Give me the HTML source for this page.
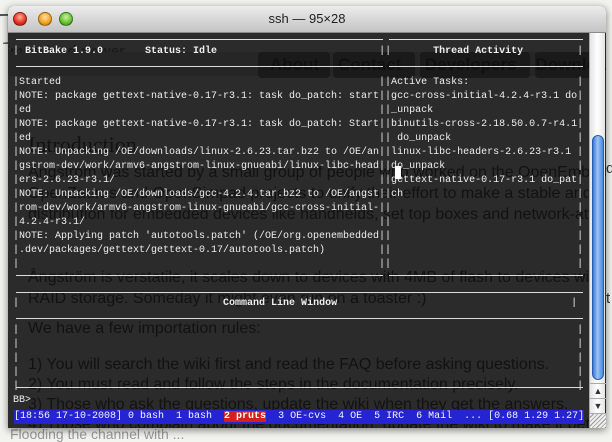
<!DOCTYPE html>
<html><head><meta charset="utf-8">
<style>
*{margin:0;padding:0;box-sizing:border-box}
body{width:612px;height:437px;overflow:hidden;background:#f3f3ef;position:relative;font-family:"Liberation Sans",sans-serif}
.pg{position:absolute;color:#222;font-family:"Liberation Sans",sans-serif;font-size:15px;white-space:nowrap}
.win{position:absolute;left:8px;top:6px;width:598px;height:422px;background:#2b2b2b;border-radius:5px 5px 0 0;overflow:hidden;box-shadow:0 2px 8px rgba(0,0,0,.5)}
.tb{position:absolute;left:0;top:0;width:598px;height:27px;background:linear-gradient(#ececec,#d4d4d4 60%,#c4c4c4);border-bottom:1px solid #8a8a8a}
.tl{position:absolute;top:6px;width:14px;height:14px;border-radius:50%;border:1px solid rgba(0,0,0,.35)}
.title{position:absolute;top:5px;left:0;width:598px;text-align:center;font-size:13px;color:#222}
.t{position:absolute;font-family:"Liberation Mono",monospace;font-size:10px;line-height:14px;color:#eee;white-space:pre}
.b{font-weight:bold}
.h{position:absolute;height:1px;background:#ddd}
.ghost{position:absolute;color:#121212;font-size:16px;white-space:nowrap;font-family:"Liberation Sans",sans-serif}
.sb{position:absolute;left:581px;top:27px;width:16px;height:395px;background:linear-gradient(90deg,#e4e4e4,#fff 50%,#e4e4e4);border-left:1px solid #aaa}
.thumb{position:absolute;left:2px;top:102px;width:12px;height:245px;border-radius:6px;background:linear-gradient(90deg,#3a78d8,#9cc4f4 45%,#4a88e0);border:1px solid #2a5ab0}
</style></head><body>
<div class="pg" style="left:-4px;top:2px;font-family:'Liberation Serif',serif;font-size:46px;color:#555">The Ångström Distribution</div>
<div class="pg" style="left:606px;top:160px;color:#333">d</div>
<div class="pg" style="left:606px;top:290px;color:#333">t</div>
<div class="pg" style="left:10px;top:426px;color:#999;font-size:14px">Flooding the channel with ...</div>

<div class="win">
 <div class="ghost" style="left:-8px;top:37px;font-weight:bold;font-size:15px;color:#1c1c1c">Embedded power</div>
 <div style="position:absolute;left:0;top:46px;width:598px;height:24px;background:#262626"></div>
 <div style="position:absolute;left:250px;top:46px;width:72px;height:26px;background:#1a1a1a;border-radius:4px"></div>
 <div style="position:absolute;left:325px;top:46px;width:82px;height:26px;background:#1a1a1a;border-radius:4px"></div>
 <div style="position:absolute;left:412px;top:46px;width:110px;height:26px;background:#1a1a1a;border-radius:4px"></div>
 <div style="position:absolute;left:527px;top:46px;width:70px;height:26px;background:#1a1a1a;border-radius:4px"></div>
 <div class="ghost" style="left:262px;top:49px;font-weight:bold;font-size:17px;color:#101010">About &nbsp;&nbsp;&nbsp;Contact &nbsp;&nbsp;&nbsp;&nbsp;Developers &nbsp;&nbsp;&nbsp;Downloads</div>
 <div class="ghost" style="left:20px;top:126px;font-size:22px;font-family:'Liberation Serif',serif">Introduction</div>
 <div class="ghost" style="left:20px;top:158px">Ångström was started by a small group of people who worked on the OpenEmbedded</div>
 <div class="ghost" style="left:20px;top:179px">OpenZaurus and OpenSimpad projects to unify their effort to make a stable and us</div>
 <div class="ghost" style="left:20px;top:200px">distribution for embedded devices like handhelds, set top boxes and network-att</div>
 <div class="ghost" style="left:20px;top:263px">Ångström is verstatile, it scales down to devices with 4MB of flash to devices with</div>
 <div class="ghost" style="left:20px;top:284px">RAID storage. Someday it might even run on a toaster :)</div>
 <div class="ghost" style="left:20px;top:314px">We have a few importation rules:</div>
 <div class="ghost" style="left:20px;top:350px">1) You will search the wiki first and read the FAQ before asking questions.</div>
 <div class="ghost" style="left:20px;top:370px">2) You must read and follow the steps in the documentation precisely.</div>
 <div class="ghost" style="left:20px;top:390px">3) Those who ask the questions, update the wiki when they get the answers.</div>
 <div class="ghost" style="left:20px;top:410px">4) Those who complain about the documentation, update the wiki to make it better</div>

 <div class="tb"></div>
 <div class="tl" style="left:5px;background:radial-gradient(circle at 50% 35%,#ffb0a0,#e0301c 60%,#a01808)"></div>
 <div class="tl" style="left:30px;background:radial-gradient(circle at 50% 35%,#ffe0a0,#f0a020 60%,#b06808)"></div>
 <div class="tl" style="left:51px;background:radial-gradient(circle at 50% 35%,#d0f0a0,#60c030 60%,#2a8010)"></div>
 <div class="title">ssh — 95×28</div>

 <div class="h" style="left:8px;top:33px;width:367px"></div>
 <div class="h" style="left:381px;top:33px;width:194px"></div>
 <div class="h" style="left:8px;top:60px;width:367px"></div>
 <div class="h" style="left:381px;top:60px;width:194px"></div>
 <div class="h" style="left:8px;top:269px;width:367px"></div>
 <div class="h" style="left:381px;top:269px;width:194px"></div>
 <div class="h" style="left:8px;top:286px;width:567px"></div>
 <div class="h" style="left:8px;top:312px;width:567px"></div>
 <div class="h" style="left:8px;top:381px;width:567px"></div>

 <div class="t" style="left:5px;top:39px">|<b> BitBake 1.9.0       Status: Idle</b>                           ||<b>       Thread Activity</b>         |</div>
 <div class="t" style="left:5px;top:70px">|Started                                                     ||Active Tasks:                  |
|NOTE: package gettext-native-0.17-r3.1: task do_patch: start||gcc-cross-initial-4.2.4-r3.1 do|
|ed                                                          ||_unpack                        |
|NOTE: package gettext-native-0.17-r3.1: task do_patch: Start||binutils-cross-2.18.50.0.7-r4.1|
|ed                                                          || do_unpack                     |
|NOTE: Unpacking /OE/downloads/linux-2.6.23.tar.bz2 to /OE/an||linux-libc-headers-2.6.23-r3.1 |
|gstrom-dev/work/armv6-angstrom-linux-gnueabi/linux-libc-head||do_unpack                      |
|ers-2.6.23-r3.1/                                            ||gettext-native-0.17-r3.1 do_pat|
|NOTE: Unpacking /OE/downloads/gcc-4.2.4.tar.bz2 to /OE/angst||ch                             |
|rom-dev/work/armv6-angstrom-linux-gnueabi/gcc-cross-initial-||                               |
|4.2.4-r3.1/                                                 ||                               |
|NOTE: Applying patch 'autotools.patch' (/OE/org.openembedded||                               |
|.dev/packages/gettext/gettext-0.17/autotools.patch)         ||                               |
|                                                            ||                               |</div>
 <div style="position:absolute;left:387px;top:160px;width:6px;height:13px;background:#fff"></div>
 <div class="t" style="left:5px;top:291px">|<b>                                  Command Line Window</b>                                       |</div>
 <div class="t" style="left:5px;top:318px">|                                                                                             |
|                                                                                             |
|                                                                                             |
|                                                                                             |
|                                                                                             |</div>
 <div class="t" style="left:5px;top:388px">BB&gt;</div>
 <div class="t" style="left:6px;top:404px;width:570px;height:14px;background:#2424d2;color:#f4f4f4">[18:56 17-10-2008] 0 bash  1 bash  <span class="b" style="background:#d42020;color:#fff">2 pruts</span>  3 OE-cvs  4 OE  5 IRC  6 Mail  ... [0.68 1.29 1.27]</div>

 <div class="sb"><div class="thumb"></div>
  <div style="position:absolute;left:0;top:350px;width:16px;height:15px;border-top:1px solid #aaa;font-size:9px;text-align:center;color:#333;line-height:15px">▲</div>
  <div style="position:absolute;left:0;top:365px;width:16px;height:15px;border-top:1px solid #aaa;font-size:9px;text-align:center;color:#333;line-height:15px">▼</div>
  <div style="position:absolute;left:0;top:380px;width:16px;height:15px;border-top:1px solid #aaa;background:repeating-linear-gradient(135deg,#eee 0 2px,#999 2px 3px)"></div>
 </div>
</div>
</body></html>
